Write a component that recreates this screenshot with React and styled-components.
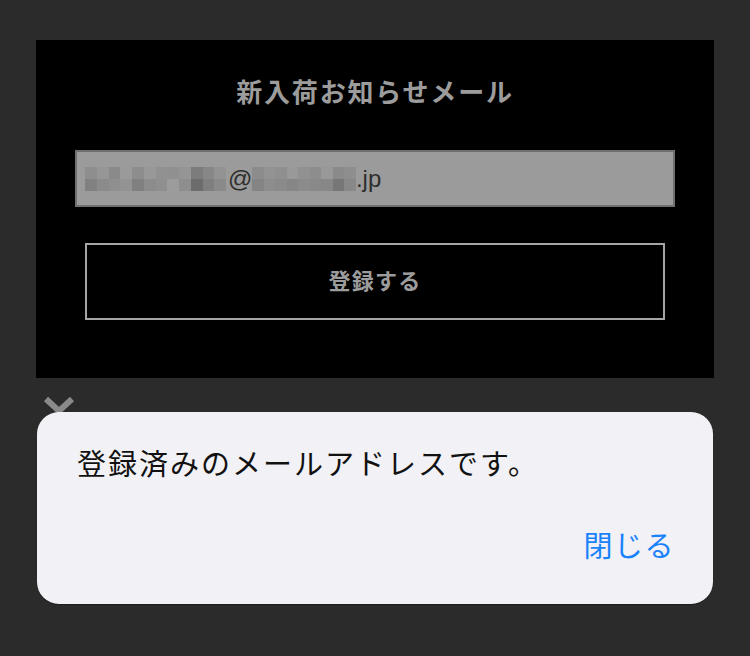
import React from "react";
import styled, { createGlobalStyle } from "styled-components";

const GlobalStyle = createGlobalStyle`
  html, body {
    margin: 0;
    padding: 0;
    background: #2b2b2b;
    font-family: "Noto Sans CJK JP", "Liberation Sans", sans-serif;
  }
`;

const Page = styled.div`
  position: relative;
  width: 750px;
  height: 656px;
  padding: 40px 36px 0;
  box-sizing: border-box;
  overflow: hidden;
`;

const Panel = styled.section`
  background: #000;
  height: 338px;
  padding: 0 39px;
  box-sizing: border-box;
  display: flex;
  flex-direction: column;
  align-items: stretch;
`;

const Title = styled.h2`
  margin: 31px 0 0;
  height: 40px;
  line-height: 40px;
  text-align: center;
  color: #9c9c9c;
  font-size: 26px;
  font-weight: 700;
  letter-spacing: 1.8px;
`;

const EmailField = styled.div`
  margin-top: 39px;
  height: 57px;
  background: #9b9b9b;
  border: 2px solid #6f6f6f;
  box-sizing: border-box;
  display: flex;
  align-items: center;
  padding-left: 8px;
  color: #2e2e2e;
  font-family: "Liberation Sans", sans-serif;
  font-size: 24px;
`;

const Mosaic = styled.div`
  display: grid;
  grid-template-columns: repeat(${(p) => p.cols}, ${(p) => p.size}px);
  grid-auto-rows: 12px;
  margin-right: ${(p) => p.gap}px;
`;

const Cell = styled.span`
  display: block;
`;

const SubmitButton = styled.button`
  margin: 36px 10px 0;
  height: 77px;
  padding: 0 0 5px;
  background: #000;
  border: 2px solid #a5a5a5;
  color: #9c9c9c;
  font-family: inherit;
  font-size: 22px;
  font-weight: 700;
  letter-spacing: 1.2px;
  cursor: pointer;
`;

const Chevron = styled.svg`
  display: block;
  margin: 17px 0 0 6px;
`;

const Dialog = styled.div`
  position: absolute;
  left: 37px;
  top: 412px;
  width: 676px;
  height: 192px;
  box-sizing: border-box;
  background: #f1f1f6;
  border-radius: 22px;
  box-shadow: 0 1px 1px rgba(0, 0, 0, 0.35);
  padding: 30px 40px 0;
  display: flex;
  flex-direction: column;
`;

const Message = styled.p`
  margin: 0;
  color: #111;
  font-size: 29px;
  line-height: 40px;
  letter-spacing: 2px;
`;

const CloseLink = styled.button`
  align-self: flex-end;
  margin-top: 42px;
  margin-right: -2px;
  padding: 0;
  border: none;
  background: none;
  color: #1a82fb;
  font-family: inherit;
  font-size: 29px;
  line-height: 40px;
  letter-spacing: 1.5px;
  cursor: pointer;
`;

const shadesA = [
  ["#8e8e8e", "#969696", "#8a8a8a", "#9a9a9a", "#8d8d8d", "#989898", "#919191", "#909090", "#959595", "#7c7c7c", "#878787", "#939393"],
  ["#818181", "#8b8b8b", "#8f8f8f", "#939393", "#808080", "#8c8c8c", "#8f8f8f", "#9c9c9c", "#8e8e8e", "#6c6c6c", "#7f7f7f", "#8a8a8a"],
];

const shadesB = [
  ["#8c8c8c", "#939393", "#8f8f8f", "#999999", "#919191", "#8d8d8d", "#989898", "#8a8a8a", "#8e8e8e"],
  ["#848484", "#8d8d8d", "#8a8a8a", "#868686", "#8b8b8b", "#898989", "#878787", "#777777", "#888888"],
];

const Blur = ({ shades, size, gap }) => (
  <Mosaic cols={shades[0].length} size={size} gap={gap}>
    {shades.flat().map((c, i) => (
      <Cell key={i} style={{ background: c }} />
    ))}
  </Mosaic>
);

export default function App() {
  return (
    <>
      <GlobalStyle />
      <Page>
        <Panel>
          <Title>新入荷お知らせメール</Title>
          <EmailField>
            <Blur shades={shadesA} size={11.75} gap={2} />
            <span>@</span>
            <Blur shades={shadesB} size={11.5} gap={0} />
            <span>.jp</span>
          </EmailField>
          <SubmitButton>登録する</SubmitButton>
        </Panel>
        <Chevron width="36" height="24" viewBox="0 0 36 24">
          <path d="M4 4 L17 16 L30 4" fill="none" stroke="#8a8a8a" strokeWidth="6" />
        </Chevron>
        <Dialog>
          <Message>登録済みのメールアドレスです。</Message>
          <CloseLink>閉じる</CloseLink>
        </Dialog>
      </Page>
    </>
  );
}
